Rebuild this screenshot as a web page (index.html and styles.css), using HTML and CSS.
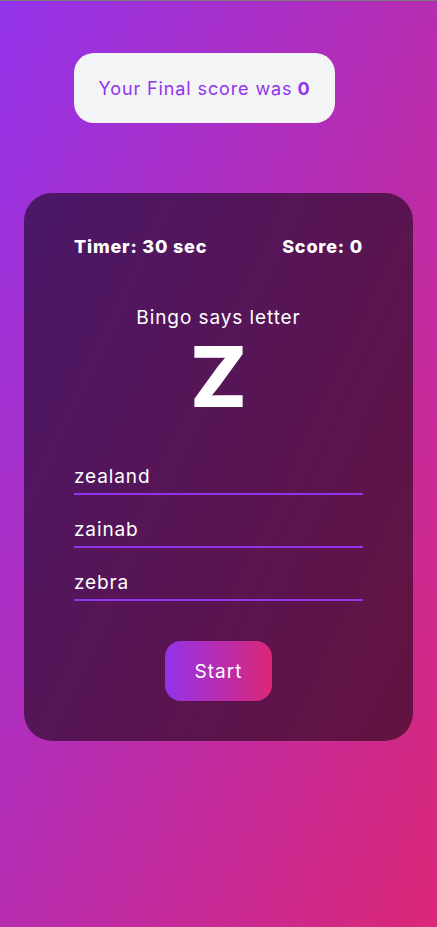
FILE: index.html
```html
<!DOCTYPE html>
<html lang="en">
<head>
<meta charset="utf-8">
<title>Bingo</title>
<link rel="stylesheet" href="styles.css">
</head>
<body>
<main class="page">
  <div class="final">Your Final score was <b>0</b></div>
  <section class="card">
    <div class="stats">
      <span>Timer: 30 sec</span>
      <span>Score: 0</span>
    </div>
    <p class="says">Bingo says letter</p>
    <div class="letter">Z</div>
    <div class="fields">
      <div class="field">zealand</div>
      <div class="field">zainab</div>
      <div class="field">zebra</div>
    </div>
    <button class="start">Start</button>
  </section>
</main>
</body>
</html>
```
FILE: styles.css
```css
* { box-sizing: border-box; }
html, body { margin: 0; padding: 0; }
body {
  font-family: Inter, "Noto Sans", sans-serif;
  letter-spacing: 0.055em;
  min-height: 927px;
  background: linear-gradient(to bottom right, #9333ea, #db2777);
  border-top: 1px solid #7a7a7a;
}
.page {
  display: flex;
  flex-direction: column;
  padding: 52px 24px 0;
}
.final {
  align-self: flex-start;
  margin-left: 50px;
  width: 261px;
  height: 70px;
  background: #f3f4f6;
  border-radius: 20px;
  color: #9333ea;
  font-size: 18px;
  display: flex;
  align-items: center;
  justify-content: center;
}
.final b { margin-left: 5px; font-weight: 700; }
.card {
  margin-top: 70px;
  width: 389px;
  height: 548px;
  border-radius: 28px;
  background: rgba(0, 0, 0, 0.52);
  padding: 40px 50px 0;
  color: #fff;
  display: flex;
  flex-direction: column;
}
.stats {
  display: flex;
  justify-content: space-between;
  font-weight: 800;
  font-size: 18px;
  line-height: 28px;
  letter-spacing: 0.045em;
}
.says {
  margin: 43px 0 0;
  text-align: center;
  font-size: 19px;
  line-height: 28px;
  letter-spacing: 0.048em;
}
.letter {
  text-align: center;
  font-weight: 800;
  font-size: 84px;
  line-height: 1;
  margin-top: 3px;
  letter-spacing: 0;
}
.fields {
  margin-top: 44px;
  display: flex;
  flex-direction: column;
  gap: 21px;
}
.field {
  font-size: 19px;
  line-height: 28px;
  border-bottom: 2px solid #9333ea;
  padding-bottom: 2px;
}
.start {
  align-self: center;
  margin-top: 40px;
  width: 107px;
  height: 60px;
  border: 0;
  border-radius: 16px;
  background: linear-gradient(to right, #9333ea, #db2777);
  color: #fff;
  font-family: inherit;
  letter-spacing: 0.055em;
  font-size: 19px;
}
```
